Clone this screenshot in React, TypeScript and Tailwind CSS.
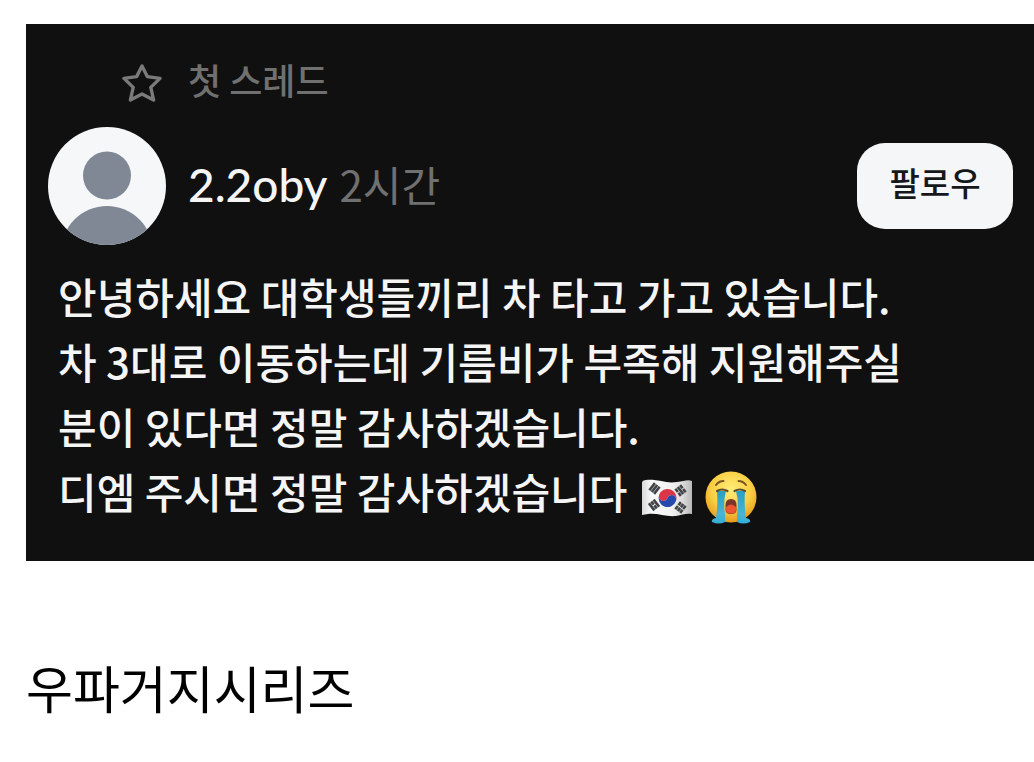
function StarIcon() {
  return (
    <svg viewBox="0 0 40 40" className="size-10" fill="none" stroke="#7a7a7a" strokeWidth="3.4" strokeLinejoin="round" aria-hidden="true">
      <path d="M20 3 L25.3 13.6 L38 15.4 L28.8 24.4 L31.6 37 L20 31 L8.4 37 L11.2 24.4 L2 15.4 L14.7 13.6 Z" />
    </svg>
  );
}

function Avatar() {
  return (
    <svg viewBox="0 0 118 118" className="w-full" role="img" aria-label="2.2oby">
      <defs>
        <clipPath id="avatar-clip">
          <circle cx="59" cy="59" r="59" />
        </clipPath>
      </defs>
      <g clipPath="url(#avatar-clip)">
        <rect width="118" height="118" fill="#f5f7f9" />
        <circle cx="59" cy="48.500" r="24" fill="#808896" />
        <ellipse cx="59" cy="125" rx="46" ry="46" fill="#808896" />
      </g>
    </svg>
  );
}

function FlagEmoji() {
  return (
    <svg viewBox="0 0 52 38" className="ml-1 inline-block h-[38px] w-[52px] align-middle" role="img" aria-label="대한민국">
      <defs>
        <linearGradient id="flag-cloth" x1="0" x2="1">
          <stop offset="0" stopColor="#d9d9d9" />
          <stop offset="0.2" stopColor="#fafafa" />
          <stop offset="0.6" stopColor="#f1f1f1" />
          <stop offset="0.8" stopColor="#dedede" />
          <stop offset="1" stopColor="#b9b9b9" />
        </linearGradient>
      </defs>
      <path d="M1 3 Q2 1 5 1 C18 0 25 5 36 3 C43 2 47 0 51 2 V35 C45 34 41 36 35 37 C25 38 17 34 7 35 L1 36 Z" fill="url(#flag-cloth)" />
      <g transform="translate(26.500 19) rotate(20)">
        <path d="M-9 0 A9 9 0 0 1 9 0 A4.500 4.500 0 0 0 0 0 A4.500 4.500 0 0 1 -9 0" fill="#dc3545" />
        <path d="M9 0 A9 9 0 0 1 -9 0 A4.500 4.500 0 0 0 0 0 A4.500 4.500 0 0 1 9 0" fill="#2749ad" />
      </g>
      <g stroke="#414446" strokeWidth="2.600">
        <g transform="translate(13.500 9.500) rotate(-52)">
          <path d="M-4.500 -3 H4.500 M-4.500 0 H4.500 M-4.500 3 H4.500" />
        </g>
        <g transform="translate(39.500 11.500) rotate(52)">
          <path d="M-4.500 -3 H-.5 M.5 -3 H4.500 M-4.500 0 H4.500 M-4.500 3 H-.5 M.5 3 H4.500" />
        </g>
        <g transform="translate(13 26) rotate(52)">
          <path d="M-4.500 -3 H4.500 M-4.500 0 H-.5 M.5 0 H4.500 M-4.500 3 H4.500" />
        </g>
        <g transform="translate(39.500 28.500) rotate(-52)">
          <path d="M-4.500 -3 H-.5 M.5 -3 H4.500 M-4.500 0 H-.5 M.5 0 H4.500 M-4.500 3 H-.5 M.5 3 H4.500" />
        </g>
      </g>
    </svg>
  );
}

function CryingEmoji() {
  return (
    <svg viewBox="0 0 52 54" className="ml-3 inline-block h-[54px] w-[52px] align-middle" role="img" aria-label="엉엉 우는 얼굴">
      <defs>
        <radialGradient id="cry-face" cx="0.5" cy="0.35" r="0.65">
          <stop offset="0" stopColor="#ffed79" />
          <stop offset="0.6" stopColor="#f9cf43" />
          <stop offset="1" stopColor="#e89a1c" />
        </radialGradient>
        <linearGradient id="cry-tear" x1="0" x2="0" y1="0" y2="1">
          <stop offset="0" stopColor="#279fc4" />
          <stop offset="0.7" stopColor="#4bb4d2" />
          <stop offset="1" stopColor="#35add6" />
        </linearGradient>
      </defs>
      <circle cx="26" cy="26" r="25.500" fill="url(#cry-face)" />
      <path d="M11 14 Q14 10 18.500 10 M33.500 10 Q38 10 41 14" fill="none" stroke="#795526" strokeWidth="2" strokeLinecap="round" />
      <path d="M20.500 34 Q20.500 28 26 28 Q31.500 28 31.500 34 V39 Q31.500 43 26 43 Q20.500 43 20.500 39 Z" fill="#7c3426" />
      <path d="M21 36 Q26 31 31 36 V39 Q31 42.500 26 42.500 Q21 42.500 21 39 Z" fill="#ee5632" />
      <path d="M12 20 H21 Q18 31 20 43 V51 Q14 54 7 51 Q6 48 11 47 Q13 34 12 20 Z" fill="url(#cry-tear)" />
      <path d="M31 20 H40 Q39 34 41 47 Q46 48 45 51 Q38 54 32 51 V43 Q34 31 31 20 Z" fill="url(#cry-tear)" />
      <path d="M12 20 Q17 17 22.500 20 M29.500 20 Q35 17 40 20" fill="none" stroke="#5c4b2c" strokeWidth="2.200" strokeLinecap="round" />
    </svg>
  );
}

export default function App() {
  return (
    <main className="min-h-screen bg-white pt-6 pb-10 pl-[26px] font-['Noto_Sans_CJK_KR',sans-serif] text-black">
      <article className="bg-[#101010] pt-[39px] pr-[21px] pb-9 pl-[22px] font-medium text-[#f5f5f5]">
        <div className="flex items-start gap-[22px]">
          <div className="flex w-[118px] shrink-0 justify-end pr-1">
            <StarIcon />
          </div>
          <p className="text-[36px] leading-8 text-[#707070]">첫 스레드</p>
        </div>
        <header className="mt-6 flex items-center gap-[22px]">
          <div className="w-[118px] shrink-0">
            <Avatar />
          </div>
          <div className="flex grow items-baseline gap-3 pb-1">
            <h1 className="font-['Lato',sans-serif] text-[46px] leading-[60px]">2.2oby</h1>
            <time className="text-[42px] leading-[60px] font-normal text-[#707070]">2시간</time>
          </div>
          <button type="button" className="h-[86px] w-[156px] shrink-0 rounded-[28px] bg-[#f4f6f8] pb-1.5 text-[33px] text-[#15171b]">
            팔로우
          </button>
        </header>
        <p className="mt-[18px] pl-[10px] text-[42px] leading-[65px] break-keep">
          안녕하세요 대학생들끼리 차 타고 가고 있습니다.
          <br />
          차 3대로 이동하는데 기름비가 부족해 지원해주실
          <br />
          분이 있다면 정말 감사하겠습니다.
          <br />
          디엠 주시면 정말 감사하겠습니다 <FlagEmoji />
          <CryingEmoji />
        </p>
      </article>
      <p className="mt-24 text-[51px] leading-[60px]">우파거지시리즈</p>
    </main>
  );
}
